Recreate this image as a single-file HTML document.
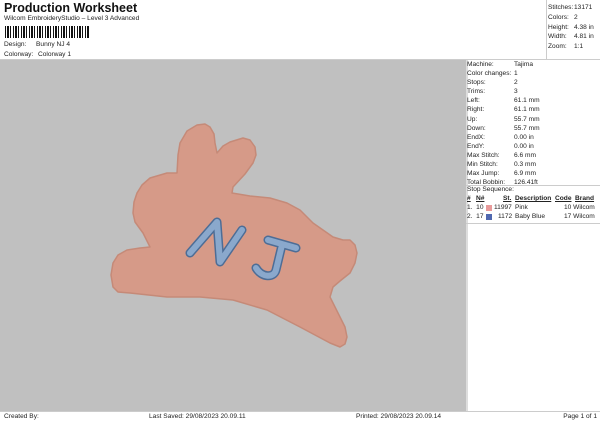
<!DOCTYPE html>
<html><head><style>
body{margin:0;width:600px;height:424px;background:#fff;font-family:"Liberation Sans",sans-serif;position:relative;overflow:hidden;color:#222}
.a{position:absolute;white-space:nowrap;font-size:6.6px}
</style></head><body>
<div class="a" style="left:4px;top:1px;font-size:12.5px;font-weight:bold;color:#111">Production Worksheet</div>
<div class="a" style="left:4px;top:15px">Wilcom EmbroideryStudio – Level 3 Advanced</div>
<div style="position:absolute;left:5px;top:26px;width:85px;height:12px;background:repeating-linear-gradient(90deg,#111 0 1px,#fff 1px 2px,#111 2px 4px,#fff 4px 5px,#111 5px 6px,#fff 6px 8px)"></div>
<div class="a" style="left:4px;top:41px">Design:</div><div class="a" style="left:36px;top:41px">Bunny NJ 4</div>
<div class="a" style="left:4px;top:51px">Colorway:</div><div class="a" style="left:38px;top:51px">Colorway 1</div>
<div style="position:absolute;left:546px;top:0;width:1px;height:59px;background:#ccc"></div>
<div style="position:absolute;left:0;top:59px;width:600px;height:1px;background:#ccc"></div>
<div class="a" style="left:548px;top:3px;line-height:9.8px">Stitches:<br>Colors:<br>Height:<br>Width:<br>Zoom:</div>
<div class="a" style="left:574px;top:3px;line-height:9.8px">13171<br>2<br>4.38 in<br>4.81 in<br>1:1</div>
<div style="position:absolute;left:0;top:60px;width:466px;height:351px;background:#c0c0c0"></div>
<div style="position:absolute;left:466px;top:60px;width:2px;height:351px;background:#ddd"></div>
<div class="a" style="left:467px;top:60px;line-height:9.1px">Machine:<br>Color changes:<br>Stops:<br>Trims:<br>Left:<br>Right:<br>Up:<br>Down:<br>EndX:<br>EndY:<br>Max Stitch:<br>Min Stitch:<br>Max Jump:<br>Total Bobbin:</div>
<div class="a" style="left:514px;top:60px;line-height:9.1px">Tajima<br>1<br>2<br>3<br>61.1 mm<br>61.1 mm<br>55.7 mm<br>55.7 mm<br>0.00 in<br>0.00 in<br>6.6 mm<br>0.3 mm<br>6.9 mm<br>126.41ft</div>
<div style="position:absolute;left:466px;top:185px;width:134px;height:1px;background:#ccc"></div>
<div class="a" style="left:467px;top:186px">Stop Sequence:</div>
<div class="a" style="left:467px;top:195px;font-weight:bold;text-decoration:underline">#</div>
<div class="a" style="left:476px;top:195px;font-weight:bold;text-decoration:underline">N#</div>
<div class="a" style="left:503px;top:195px;font-weight:bold;text-decoration:underline">St.</div>
<div class="a" style="left:515px;top:195px;font-weight:bold;text-decoration:underline">Description</div>
<div class="a" style="left:555px;top:195px;font-weight:bold;text-decoration:underline">Code</div>
<div class="a" style="left:575px;top:195px;font-weight:bold;text-decoration:underline">Brand</div>
<div class="a" style="left:467px;top:204px">1.&nbsp; 10</div><div style="position:absolute;left:486px;top:205px;width:6px;height:6px;background:#e89a9a"></div><div class="a" style="left:494px;top:204px">11997</div><div class="a" style="left:515px;top:204px">Pink</div><div class="a" style="left:564px;top:204px">10 Wilcom</div>
<div class="a" style="left:467px;top:213px">2.&nbsp; 17</div><div style="position:absolute;left:486px;top:214px;width:6px;height:6px;background:#5068b0"></div><div class="a" style="left:498px;top:213px">1172</div><div class="a" style="left:515px;top:213px">Baby Blue</div><div class="a" style="left:564px;top:213px">17 Wilcom</div>
<div style="position:absolute;left:466px;top:223px;width:134px;height:1px;background:#ccc"></div>
<svg style="position:absolute;left:0;top:0" width="600" height="424">
<polygon points="177,173 178,155 180,143 187,131 197,125 205,124 210,127 214,134 215,143 217,153 223,146 230,142 243,138 250,140 255,147 256,155 253,163 245,174 233,187 232,193 250,196 270,198 287,203 300,210 313,223 333,237 343,240 350,240 355,245 357,253 355,263 350,273 340,281 333,287 330,297 335,307 340,317 345,327 347,337 345,344 340,347 330,343 315,335 300,327 267,310 233,300 200,297 167,297 130,293 118,292 113,287 111,275 113,263 118,255 127,250 140,248 150,247 143,233 135,222 133,213 134,202 137,193 142,185 150,178 167,173" fill="#d69a88" stroke="#c58a78" stroke-width="1.5" stroke-linejoin="round"/>
<g fill="none" stroke-linecap="round" stroke-linejoin="round">
<path d="M190,253 L217,222 L220,262 L242,230" stroke="#4d6d96" stroke-width="9"/>
<path d="M268,240 L296,248 M282,245 L276,270 C274,278 262,278 256,268" stroke="#4d6d96" stroke-width="9"/>
<path d="M190,253 L217,222 L220,262 L242,230" stroke="#8aa8cc" stroke-width="6"/>
<path d="M268,240 L296,248 M282,245 L276,270 C274,278 262,278 256,268" stroke="#8aa8cc" stroke-width="6"/>
</g>
</svg>
<div style="position:absolute;left:0;top:411px;width:600px;height:1px;background:#ccc"></div>
<div class="a" style="left:4px;top:413px">Created By:</div>
<div class="a" style="left:149px;top:413px">Last Saved: 29/08/2023 20.09.11</div>
<div class="a" style="left:356px;top:413px">Printed: 29/08/2023 20.09.14</div>
<div class="a" style="right:3px;top:413px">Page 1 of 1</div>
</body></html>
